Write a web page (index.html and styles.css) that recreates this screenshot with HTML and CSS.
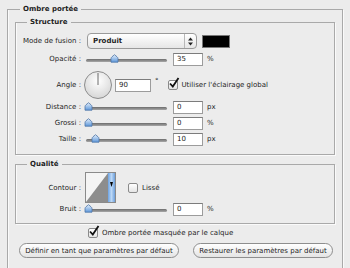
FILE: index.html
```html
<!DOCTYPE html>
<html lang="fr">
<head>
    <meta charset="UTF-8">
    <title>Ombre portée</title>
    <link rel="stylesheet" href="styles.css">
</head>
<body>
    <fieldset class="panel">
        <legend>Ombre portée</legend>

        <fieldset class="group">
            <legend>Structure</legend>

            <div class="row row-select">
                <span class="label">Mode de fusion :</span>
                <div class="popup">
                    <span class="popup-value">Produit</span>
                    <span class="popup-arrows">
                        <svg width="5" height="9" viewBox="0 0 5 9"><polygon points="2.5,0.5 5,3.5 0,3.5" fill="#222"/><polygon points="0,5.5 5,5.5 2.5,8.5" fill="#222"/></svg>
                    </span>
                </div>
                <span class="swatch"></span>
            </div>

            <div class="row row-tall">
                <span class="label">Opacité :</span>
                <div class="slider">
                    <div class="track"></div>
                    <svg class="thumb" style="left:24px" width="9" height="9" viewBox="0 0 9 9"><use href="#thumb-shape"/></svg>
                </div>
                <span class="field">35</span>
                <span class="unit">%</span>
            </div>

            <div class="row row-angle">
                <span class="label">Angle :</span>
                <svg class="dial" width="28" height="28" viewBox="0 0 28 28">
                    <defs>
                        <radialGradient id="dial-fill" cx="50%" cy="35%" r="65%">
                            <stop offset="0" stop-color="#ffffff"/>
                            <stop offset="1" stop-color="#d6d6d6"/>
                        </radialGradient>
                    </defs>
                    <circle cx="14" cy="14" r="13.5" fill="url(#dial-fill)" stroke="#8c8c8c"/>
                    <line x1="14" y1="14" x2="14" y2="2" stroke="#6a6a6a" stroke-width="1"/>
                </svg>
                <span class="field field-angle">90</span>
                <span class="degree">°</span>
                <span class="check is-checked">
                    <svg width="12" height="12" viewBox="0 0 12 12"><path d="M2 6.5 L4.8 9.5 L10.5 1" stroke="#111" stroke-width="1.8" fill="none"/></svg>
                </span>
                <span class="check-text">Utiliser l'éclairage global</span>
            </div>

            <div class="row">
                <span class="label">Distance :</span>
                <div class="slider">
                    <div class="track"></div>
                    <svg class="thumb" style="left:-2px" width="9" height="9" viewBox="0 0 9 9"><use href="#thumb-shape"/></svg>
                </div>
                <span class="field">0</span>
                <span class="unit">px</span>
            </div>

            <div class="row">
                <span class="label">Grossi :</span>
                <div class="slider">
                    <div class="track"></div>
                    <svg class="thumb" style="left:-2px" width="9" height="9" viewBox="0 0 9 9"><use href="#thumb-shape"/></svg>
                </div>
                <span class="field">0</span>
                <span class="unit">%</span>
            </div>

            <div class="row">
                <span class="label">Taille :</span>
                <div class="slider">
                    <div class="track"></div>
                    <svg class="thumb" style="left:5px" width="9" height="9" viewBox="0 0 9 9"><use href="#thumb-shape"/></svg>
                </div>
                <span class="field">10</span>
                <span class="unit">px</span>
            </div>
        </fieldset>

        <fieldset class="group quality">
            <legend>Qualité</legend>

            <div class="row row-contour">
                <span class="label">Contour :</span>
                <svg class="contour" width="31" height="31" viewBox="0 0 31 31">
                    <defs>
                        <linearGradient id="strip" x1="0" y1="0" x2="1" y2="0">
                            <stop offset="0" stop-color="#6da3e3"/>
                            <stop offset="0.5" stop-color="#bcd8f6"/>
                            <stop offset="1" stop-color="#6d9fdb"/>
                        </linearGradient>
                    </defs>
                    <rect x="0.5" y="0.5" width="30" height="30" fill="#f4f4f4" stroke="#8a8a8a"/>
                    <polygon points="1,30 23,1 23,30" fill="#8d8d8d"/>
                    <rect x="23" y="1" width="7" height="29" fill="url(#strip)"/>
                    <polygon points="25,10 28,10 26.5,15" fill="#000"/>
                </svg>
                <span class="check check-smooth"></span>
                <span class="check-text">Lissé</span>
            </div>

            <div class="row row-noise">
                <span class="label">Bruit :</span>
                <div class="slider">
                    <div class="track"></div>
                    <svg class="thumb" style="left:-2px" width="9" height="9" viewBox="0 0 9 9"><use href="#thumb-shape"/></svg>
                </div>
                <span class="field">0</span>
                <span class="unit">%</span>
            </div>
        </fieldset>

        <div class="mask-row">
            <span class="check is-checked">
                <svg width="12" height="12" viewBox="0 0 12 12"><path d="M2 6.5 L4.8 9.5 L10.5 1" stroke="#111" stroke-width="1.8" fill="none"/></svg>
            </span>
            <span class="check-text">Ombre portée masquée par le calque</span>
        </div>

        <div class="buttons">
            <button class="btn btn-define">Définir en tant que paramètres par défaut</button>
            <button class="btn btn-restore">Restaurer les paramètres par défaut</button>
        </div>
    </fieldset>

    <svg class="defs" width="0" height="0">
        <defs>
            <linearGradient id="thumb-fill" x1="0" y1="0" x2="0" y2="1">
                <stop offset="0" stop-color="#e4effb"/>
                <stop offset="1" stop-color="#5d97da"/>
            </linearGradient>
            <path id="thumb-shape" d="M1 8.2 L1 4.6 Q1 3.6 2 2.8 L4.5 0.7 L7 2.8 Q8 3.6 8 4.6 L8 8.2 Z" fill="url(#thumb-fill)" stroke="#4f75a6" stroke-width="0.8"/>
        </defs>
    </svg>
</body>
</html>
```

FILE: styles.css
```css
body {
    margin: 0;
    height: 268px;
    overflow: hidden;
    background-color: #ececec;
    font-family: "DejaVu Sans", sans-serif;
    font-size: 7px;
    color: #1e1e1e;
}
fieldset {
    margin: 0;
    min-width: 0;
    border: 1px solid #a9a9a9;
    box-shadow: 1px 1px 0 #fafafa, inset 1px 0 0 #fafafa;
}
legend {
    height: 9px;
    padding: 0 3px;
    line-height: 9px;
    font-weight: bold;
}
.panel {
    margin: 5px 7px 0;
    padding: 4px 7px 40px;
}
.panel > legend {
    margin-left: 5px;
}
.group {
    padding: 6px 8px 7px;
}
.group > legend {
    margin-left: 3px;
}
.quality {
    margin-top: 5px;
    padding-top: 3px;
    padding-bottom: 8px;
}
.row {
    display: flex;
    align-items: center;
    height: 16px;
}
.row-select {
    height: 16px;
}
.row-tall {
    height: 20px;
}
.row-angle {
    height: 30px;
    padding-top: 2px;
    box-sizing: border-box;
}
.row-contour {
    height: 31px;
}
.row-noise {
    height: 12px;
}
.label {
    display: flex;
    justify-content: flex-end;
    flex: none;
    width: 57px;
    white-space: nowrap;
}
.popup {
    display: flex;
    align-items: center;
    flex: none;
    width: 110px;
    height: 16px;
    margin-left: 6px;
    box-sizing: border-box;
    border: 1px solid #9a9a9a;
    border-radius: 4px;
    background: linear-gradient(#ffffff, #e6e6e6);
}
.popup-value {
    flex: 1;
    padding-left: 5px;
    font-weight: bold;
}
.popup-arrows {
    display: flex;
    align-items: center;
    justify-content: center;
    width: 11px;
    height: 100%;
    border-left: 1px solid #b8b8b8;
}
.swatch {
    flex: none;
    width: 28px;
    height: 13px;
    margin-left: 5px;
    box-sizing: border-box;
    border: 1px solid #777;
    background-color: #000;
}
.slider {
    position: relative;
    flex: none;
    width: 81px;
    height: 10px;
    margin-left: 5px;
}
.track {
    height: 3px;
    margin-top: 5px;
    border-radius: 2px;
    background: linear-gradient(#6c6c6c, #a8a8a8);
}
.thumb {
    position: absolute;
    top: 0;
}
.field {
    flex: none;
    width: 30px;
    height: 13px;
    margin-left: 6px;
    padding-left: 3px;
    box-sizing: border-box;
    border: 1px solid #9c9c9c;
    border-top-color: #7c7c7c;
    background-color: #fff;
    line-height: 11px;
}
.field-angle {
    width: 36px;
    margin-left: 3px;
}
.unit {
    margin-left: 4px;
}
.dial {
    flex: none;
    margin-left: 3px;
}
.degree {
    align-self: flex-start;
    margin-top: 6px;
    margin-left: 4px;
}
.check {
    position: relative;
    flex: none;
    width: 10px;
    height: 10px;
    margin-left: 9px;
    box-sizing: border-box;
    border: 1px solid #8a8a8a;
    border-radius: 2px;
    background: linear-gradient(#ffffff, #e4e4e4);
}
.check svg {
    position: absolute;
    left: -1px;
    top: -4px;
}
.check-text {
    margin-left: 4px;
}
.contour {
    flex: none;
    margin-left: 4px;
}
.check-smooth {
    margin-left: 12px;
}
.mask-row {
    display: flex;
    align-items: center;
    height: 12px;
    margin-top: 3px;
    padding-left: 64px;
}
.buttons {
    display: flex;
    gap: 14px;
    margin-top: 4px;
    padding-left: 4px;
}
.btn {
    height: 15px;
    padding: 0;
    border: 1px solid #8e8e8e;
    border-radius: 8px;
    background: linear-gradient(#ffffff, #e4e4e4);
    font-family: "DejaVu Sans", sans-serif;
    font-size: 7px;
    color: #1e1e1e;
}
.btn-define {
    width: 160px;
}
.btn-restore {
    width: 140px;
}
.defs {
    position: absolute;
}
```
